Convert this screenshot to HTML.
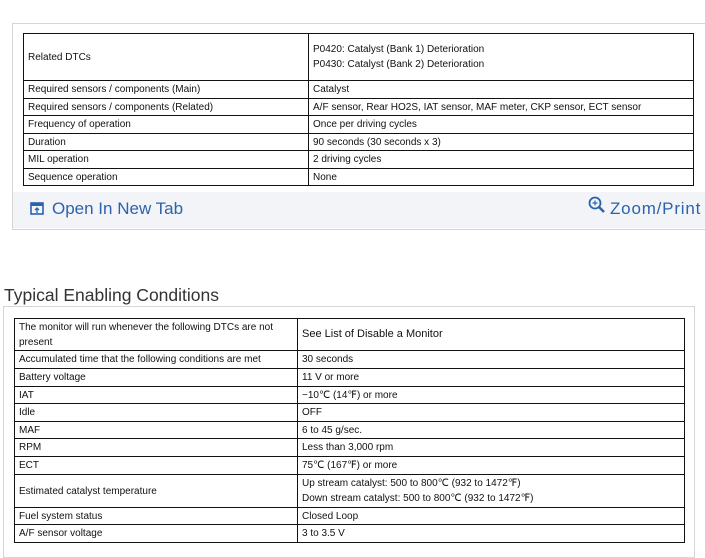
<!DOCTYPE html>
<html><head><style>
body{margin:0;width:705px;height:546px;background:#fff;font-family:"Liberation Sans",Arial,sans-serif;position:relative;overflow:hidden;color:#111}
.panel{position:absolute;border:1px solid #d6d6d6;background:#fff}
table{position:absolute;border-collapse:collapse;font-size:10px;table-layout:fixed}
td{border:1px solid #111;padding:0 4px;line-height:15px;vertical-align:middle}
.bar{position:absolute;background:#f3f4f8}
.link{position:absolute;color:#2b63ad;font-size:17px;}
h2{position:absolute;margin:0;font-weight:normal;font-size:17.5px;color:#333;left:4px;top:285px}
</style></head><body>
<div class="panel" style="left:12px;top:23px;width:700px;height:205px;border-right:none"></div>
<div class="bar" style="left:13px;top:192px;width:692px;height:36px"></div>
<table style="left:23px;top:33px;width:671px">
<colgroup><col style="width:285px"><col></colgroup>
<tr style="height:47px"><td>Related DTCs</td><td>P0420: Catalyst (Bank 1) Deterioration<br>P0430: Catalyst (Bank 2) Deterioration</td></tr>
<tr style="height:18px"><td>Required sensors / components (Main)</td><td>Catalyst</td></tr>
<tr style="height:17px"><td>Required sensors / components (Related)</td><td>A/F sensor, Rear HO2S, IAT sensor, MAF meter, CKP sensor, ECT sensor</td></tr>
<tr style="height:18px"><td>Frequency of operation</td><td>Once per driving cycles</td></tr>
<tr style="height:17px"><td>Duration</td><td>90 seconds (30 seconds x 3)</td></tr>
<tr style="height:18px"><td>MIL operation</td><td>2 driving cycles</td></tr>
<tr style="height:17px"><td>Sequence operation</td><td>None</td></tr>
</table>
<svg style="position:absolute;left:30px;top:202px" width="14" height="13" viewBox="0 0 14 13"><rect x="1" y="1" width="12" height="11" fill="none" stroke="#2b63ad" stroke-width="1.6"/><rect x="1" y="1" width="12" height="3" fill="#2b63ad"/><path d="M7 11V6M5 8l2-2 2 2" stroke="#2b63ad" stroke-width="1.3" fill="none"/></svg>
<div class="link" style="left:52px;top:199px">Open In New Tab</div>
<svg style="position:absolute;left:588px;top:196px" width="18" height="18" viewBox="0 0 18 18"><circle cx="7" cy="7" r="5.5" fill="none" stroke="#2b63ad" stroke-width="1.8"/><path d="M11 11l5 5" stroke="#2b63ad" stroke-width="2.5"/><path d="M7 4.5v5M4.5 7h5" stroke="#2b63ad" stroke-width="1.2"/></svg>
<div class="link" style="left:610px;top:199px;letter-spacing:0.8px">Zoom/Print</div>
<h2>Typical Enabling Conditions</h2>
<div class="panel" style="left:3px;top:306px;width:690px;height:250px"></div>
<table style="left:14px;top:318px;width:671px">
<colgroup><col style="width:283px"><col></colgroup>
<tr style="height:32px"><td>The monitor will run whenever the following DTCs are not present</td><td style="font-size:11px">See List of Disable a Monitor</td></tr>
<tr style="height:18px"><td>Accumulated time that the following conditions are met</td><td>30 seconds</td></tr>
<tr style="height:18px"><td>Battery voltage</td><td>11 V or more</td></tr>
<tr style="height:17px"><td>IAT</td><td>&minus;10&#8451; (14&#8457;) or more</td></tr>
<tr style="height:18px"><td>Idle</td><td>OFF</td></tr>
<tr style="height:17px"><td>MAF</td><td>6 to 45 g/sec.</td></tr>
<tr style="height:18px"><td>RPM</td><td>Less than 3,000 rpm</td></tr>
<tr style="height:18px"><td>ECT</td><td>75&#8451; (167&#8457;) or more</td></tr>
<tr style="height:33px"><td>Estimated catalyst temperature</td><td>Up stream catalyst: 500 to 800&#8451; (932 to 1472&#8457;)<br>Down stream catalyst: 500 to 800&#8451; (932 to 1472&#8457;)</td></tr>
<tr style="height:17px"><td>Fuel system status</td><td>Closed Loop</td></tr>
<tr style="height:18px"><td>A/F sensor voltage</td><td>3 to 3.5 V</td></tr>
</table>
</body></html>
